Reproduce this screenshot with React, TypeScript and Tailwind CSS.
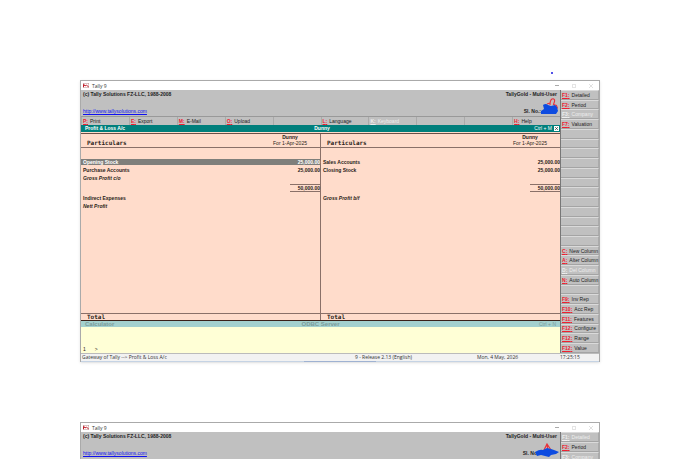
import React from 'react';
import { clsx } from 'clsx';

type SideKey = { code: string; label: string; disabled?: boolean } | null;
type Line = { name: string; amount?: string; selected?: boolean; italic?: boolean; sum?: boolean };

const menu = [
    { code: 'P', label: 'Print' },
    { code: 'E', label: 'Export' },
    { code: 'M', label: 'E-Mail' },
    { code: 'O', label: 'Upload' },
    null,
    { code: 'L', label: 'Language' },
    { code: 'K', label: 'Keyboard', disabled: true },
    null,
    null,
    { code: 'H', label: 'Help' },
];

const sideKeys: SideKey[] = [
    { code: 'F1', label: 'Detailed' },
    { code: 'F2', label: 'Period' },
    { code: 'F3', label: 'Company', disabled: true },
    { code: 'F7', label: 'Valuation' },
    ...Array<SideKey>(12).fill(null),
    { code: 'C', label: 'New Column' },
    { code: 'A', label: 'Alter Column' },
    { code: 'D', label: 'Del Column', disabled: true },
    { code: 'N', label: 'Auto Column' },
    null,
    { code: 'F9', label: 'Inv Rep' },
    { code: 'F10', label: 'Acc Rep' },
    { code: 'F11', label: 'Features' },
    { code: 'F12', label: 'Configure' },
    { code: 'F12', label: 'Range' },
    { code: 'F12', label: 'Value' },
];

const nextSideKeys: SideKey[] = [
    { code: 'F1', label: 'Detailed', disabled: true },
    { code: 'F2', label: 'Period' },
    { code: 'F3', label: 'Company', disabled: true },
];

const debit: Line[] = [
    { name: 'Opening Stock', amount: '25,000.00', selected: true },
    { name: 'Purchase Accounts', amount: '25,000.00' },
    { name: 'Gross Profit c/o', italic: true },
    { name: '', amount: '50,000.00', sum: true },
    { name: 'Indirect Expenses' },
    { name: 'Nett Profit', italic: true },
];

const credit: Line[] = [
    { name: 'Sales Accounts', amount: '25,000.00' },
    { name: 'Closing Stock', amount: '25,000.00' },
    { name: '' },
    { name: '', amount: '50,000.00', sum: true },
    { name: 'Gross Profit b/f', italic: true },
];

const TitleBar: React.FC = () => (
    <div className="flex h-[9px] items-center bg-white pr-[6px] pl-[2px] text-[#333]">
        <svg viewBox="0 0 12 10" className="h-[5px] w-[6px]">
            <rect x="0.5" y="0.5" width="11" height="9" fill="#fff" stroke="#b88" />
            <path d="M1 2l3 4 3-2 4 4M1 3v5" fill="none" stroke="#c01c28" strokeWidth="2" />
        </svg>
        <span className="ml-[3px] font-['Open_Sans',sans-serif]">Tally 9</span>
        <div className="ml-auto flex items-center gap-[13px] text-[#999]">
            <button aria-label="Minimize" className="flex h-1 w-1 items-center"><span className="h-px w-full bg-[#aaa]" /></button>
            <button aria-label="Maximize" className="h-1 w-1 border border-[#e4e4e4]" />
            <button aria-label="Close" className="flex">
                <svg viewBox="0 0 4 4" className="size-1"><path d="M0 0l4 4M4 0l-4 4" stroke="#ccc" strokeWidth=".6" /></svg>
            </button>
        </div>
    </div>
);

// blue marker scribble over the serial number
const Scribble: React.FC<{ wide?: boolean }> = ({ wide }) => (
    wide ? (
        <svg viewBox="0 0 24 14" className="-ml-[5px] h-[14px] w-[24px]">
            <path d="M9 7l3-6 4 6M12 2l1 5" fill="none" stroke="#e8303a" strokeWidth="1.2" />
            <path d="M0 9q5-3 8-2l4-2 4 1 3 1 5 2-3 2-5 1-2 2-4-1-4-1-4 1z" fill="#0d4be0" />
        </svg>
    ) : (
        <svg viewBox="0 0 18 17" className="h-[17px] w-[18px]">
            <path d="M9 7c0-2 0-5 2-6s3 1 2.500 2.500l-1 3 3 1 1 3M9 5l-3 1" fill="none" stroke="#e8303a" strokeWidth="1.100" />
            <path d="M2 7q3-2 5 0l3 1 4-1 2 2 1 4-2 3-5 0-5 0-5 0 0-3 3-2z" fill="#0d4be0" />
        </svg>
    )
);

const Banner: React.FC<{ wide?: boolean }> = ({ wide }) => (
    <header className="flex h-[26px] justify-between pl-[2px] font-bold text-[#222]">
        <div className="flex flex-col justify-between pb-px">
            <span>(c) Tally Solutions FZ-LLC, 1988-2008</span>
            <a href="http://www.tallysolutions.com" className="font-normal text-[#1010f0] underline">http://www.tallysolutions.com</a>
        </div>
        <div className="flex flex-col items-end justify-between pb-px">
            <span className="pr-[3px]">TallyGold - Multi-User</span>
            <div className="flex h-[17px] items-end pr-px">
                <span>Sl. No.:</span>
                <Scribble wide={wide} />
            </div>
        </div>
    </header>
);

const KeyLabel: React.FC<{ code: string; label: string; disabled?: boolean }> = ({ code, label, disabled }) => (
    <>
        <span className={clsx('font-bold underline', disabled ? 'text-[#eee]' : 'text-[#f02030]')}>{code}:</span>
        <span className={clsx('ml-[2px]', disabled ? 'text-[#eee]' : 'text-[#222]')}>{label}</span>
    </>
);

const SideBar: React.FC<{ keys: SideKey[]; fill?: boolean }> = ({ keys, fill }) => (
    <nav className="flex w-[39px] shrink-0 flex-col border-l border-[#777] bg-[#c0c0c0]">
        {keys.map((k, idx) => (
            <button
                key={idx}
                disabled={!k || k.disabled}
                className={clsx('flex items-center border-t border-r border-b border-t-[#dadada] border-r-[#aaa] border-b-[#a4a4a4] pl-px leading-[6px] whitespace-nowrap', fill ? 'min-h-[9px] flex-1' : 'h-[10px]')}
            >
                {k && <KeyLabel {...k} />}
            </button>
        ))}
    </nav>
);

const Account: React.FC<{ lines: Line[]; className?: string }> = ({ lines, className }) => (
    <section className={clsx('flex flex-1 flex-col', className)}>
        <table className="w-full table-fixed border-collapse">
            <thead>
                <tr className="h-[13px] border-b border-[#8a7068]">
                    <th className="p-0 pl-[6px] text-left align-bottom font-['DejaVu_Sans_Mono',monospace] text-[6px] leading-[8px] font-bold">Particulars</th>
                    <th className="w-[60px] p-0 leading-[6px] font-normal">
                        <div className="font-bold">Dunny</div>
                        <div>For 1-Apr-2025</div>
                    </th>
                </tr>
            </thead>
            <tbody className="font-bold">
                <tr className="h-[11px]"><td colSpan={2} /></tr>
                {lines.map((l, idx) => (
                    <tr key={idx} className={clsx(l.sum ? 'h-[12px]' : 'h-[8px]')}>
                        <td className="p-0">
                            <div className={clsx('h-[6px] pl-[2px] leading-[6px]', l.italic && 'italic', l.selected && 'bg-[#7f7f7b] text-white')}>{l.name}</div>
                        </td>
                        <td className="p-0 text-right">
                            <div className={clsx('leading-[6px]', l.selected && 'bg-[#7f7f7b] text-white', l.sum ? 'ml-auto h-[8px] w-[30px] border-y border-[#8a7068]' : 'h-[6px]')}>{l.amount}</div>
                        </td>
                    </tr>
                ))}
            </tbody>
        </table>
        <div className="mt-auto h-[7px] border-t border-[#8a7068] pl-[6px] font-['DejaVu_Sans_Mono',monospace] text-[6px] leading-[6px] font-bold">Total</div>
    </section>
);

const App: React.FC = () => {
    return (
        <div className="h-screen overflow-hidden bg-white px-20 font-['Liberation_Sans',Arial,sans-serif] text-[5px] leading-[8px] text-[#2a1c18]">
            <div className="flex h-20 items-end justify-end pr-[47px] pb-[6px]">
                <span className="size-[2px] rounded-full bg-[#1818e0]" />
            </div>

            <div className="border-x border-t border-[#aaa] shadow-sm">
                <TitleBar />
                <div className="flex">
                    <main className="min-w-0 flex-1 bg-[#c0c0c0]">
                        <Banner />
                        <div className="grid h-[9px] grid-cols-10 border-t border-[#999]">
                            {menu.map((m, idx) => (
                                <button key={idx} disabled={!m || m.disabled} className="flex items-center border-l border-[#aaa] pl-px whitespace-nowrap">
                                    {m && <KeyLabel {...m} />}
                                </button>
                            ))}
                        </div>
                        <div className="grid h-[7px] grid-cols-3 items-center bg-[#007f7c] pr-px pl-[4px] leading-[7px] font-bold text-white">
                            <h1>Profit &amp; Loss A/c</h1>
                            <span className="text-center">Dunny</span>
                            <div className="flex items-center justify-end gap-[2px]">
                                <span className="font-normal">Ctrl + M</span>
                                <button aria-label="Close report" className="flex size-[5px] items-center justify-center bg-white">
                                    <svg viewBox="0 0 4 4" className="size-[3px]"><path d="M0 0l4 4M4 0l-4 4" stroke="#222" strokeWidth=".8" /></svg>
                                </button>
                            </div>
                        </div>
                        <div className="h-[2px] border-b border-[#6b5048] bg-[#ffdccb]" />
                        <div className="flex min-h-[187px] border-b border-[#3a2018] bg-[#ffdccb]">
                            <Account lines={debit} className="border-r border-[#8a7068]" />
                            <Account lines={credit} />
                        </div>
                        <div className="grid h-[6px] grid-cols-3 bg-[#a3d0ce] px-[4px] text-[6px] leading-[6px] font-bold text-[#7d9c9b]">
                            <span>Calculator</span>
                            <span className="text-center">ODBC Server</span>
                            <span className="text-right text-[5px] font-normal">Ctrl + N</span>
                        </div>
                        <div className="flex h-[26px] items-end gap-[9px] bg-[#ffffd6] pl-[2px]">
                            <span>1</span>
                            <span>&gt;</span>
                        </div>
                    </main>
                    <SideBar keys={sideKeys} fill />
                </div>
                <footer className="flex h-[8px] border-t border-[#bbb] bg-[#f2f2f2] pl-px font-['Open_Sans',sans-serif] leading-[7px] text-[#333]">
                    <span className="w-[273px]">Gateway of Tally --&gt; Profit &amp; Loss A/c</span>
                    <span>9 - Release 2.13 (English)</span>
                    <span className="ml-auto w-[83px]">Mon, 4 May, 2026</span>
                    <span className="w-[39px]">17:25:15</span>
                </footer>
                <div className="flex h-px justify-center bg-[#c5d3e4]">
                    <div className="w-[72px] bg-[#9fb2d2]" />
                </div>
            </div>

            <div className="mt-[60px] border-x border-t border-[#aaa]">
                <TitleBar />
                <div className="flex bg-[#c0c0c0]">
                    <div className="min-w-0 flex-1">
                        <Banner wide />
                    </div>
                    <SideBar keys={nextSideKeys} />
                </div>
            </div>
        </div>
    );
};

export default App;
